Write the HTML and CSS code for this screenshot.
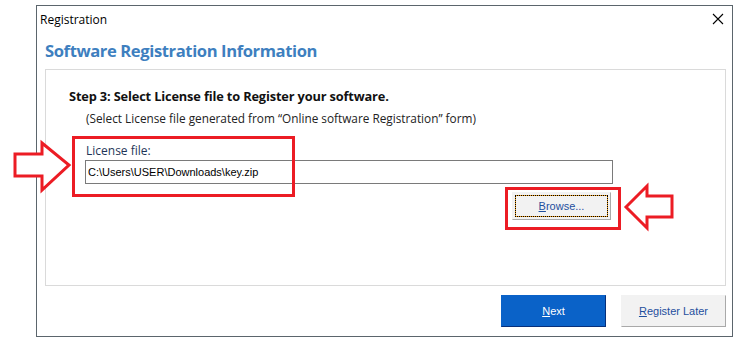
FILE: index.html
```html
<!DOCTYPE html>
<html lang="en">
<head>
  <meta charset="UTF-8">
  <title>Registration</title>
  <link rel="stylesheet" href="styles.css">
</head>
<body>
  <div class="window">
    <div class="titlebar">
      <span class="title">Registration</span>
      <svg class="close" width="12" height="12" viewBox="0 0 12 12">
        <path d="M1 1 L11 11 M11 1 L1 11" stroke="#000" stroke-width="1.1" fill="none"/>
      </svg>
    </div>
    <h1 class="heading">Software Registration Information</h1>
    <div class="panel">
      <p class="step">Step 3: Select License file to Register your software.</p>
      <p class="hint">(Select License file generated from “Online software Registration” form)</p>
      <div class="field">
        <label class="label" for="license">License file:</label>
        <input class="input" id="license" type="text" value="C:\Users\USER\Downloads\key.zip">
      </div>
      <div class="browse-row">
        <button class="btn browse"><span class="focus"><u>B</u>rowse...</span></button>
      </div>
    </div>
    <div class="actions">
      <button class="btn primary"><u>N</u>ext</button>
      <button class="btn secondary"><u>R</u>egister Later</button>
    </div>
  </div>

  <!-- red annotation marks drawn over the screenshot -->
  <svg class="marks" width="741" height="342" viewBox="0 0 741 342">
    <g fill="none" stroke="#ec1c24" stroke-width="3">
      <rect x="73.5" y="137.5" width="220" height="58"/>
      <rect x="506.5" y="188.5" width="113" height="40"/>
      <polygon points="15,154 42,154 42,143 69,165 42,190 42,176 15,176" fill="#fff"/>
      <polygon points="626,207 647,186 647,196 672,196 672,217 647,217 647,228" fill="#fff"/>
    </g>
  </svg>
</body>
</html>
```

FILE: styles.css
```css
body {
  margin: 0;
  background: #fff;
  font-family: "Open Sans", "Noto Sans", sans-serif;
  position: relative;
  width: 741px;
  height: 342px;
  overflow: hidden;
}
.window {
  margin: 5px 0 0 36px;
  width: 695px;
  height: 330px;
  border: 1px solid #5b656c;
  background: #fff;
  display: flex;
  flex-direction: column;
}
.titlebar {
  height: 26px;
  display: flex;
  align-items: center;
  justify-content: space-between;
  padding: 0 8px 0 3px;
}
.title {
  font-size: 12px;
  color: #000;
}
.heading {
  margin: 7px 0 0 8px;
  font-size: 16.6px;
  font-weight: 700;
  color: #3e7fbf;
  line-height: 24px;
  letter-spacing: -0.4px;
}
.panel {
  margin: 6px 6px 0 8px;
  height: 215px;
  border: 1px solid #dadada;
  padding: 0 0 0 23px;
}
.step {
  margin: 17px 0 0;
  font-size: 12.8px;
  font-weight: 700;
  color: #111;
  line-height: 18px;
  letter-spacing: -0.15px;
}
.hint {
  margin: 5px 0 0 17px;
  font-size: 11.8px;
  color: #222;
  line-height: 17px;
}
.field {
  margin: 16px 0 0 16px;
  display: flex;
  flex-direction: column;
}
.label {
  font-size: 12px;
  color: #1e3557;
  line-height: 16px;
  margin-left: 1px;
}
.input {
  box-sizing: border-box;
  width: 528px;
  height: 24px;
  margin-top: 1px;
  border: 1px solid #7a7a7a;
  padding: 0 2px;
  font-family: "Liberation Sans", Arial, sans-serif;
  font-size: 11px;
  color: #000;
  outline: none;
}
.browse-row {
  display: flex;
  justify-content: flex-end;
  padding-right: 114px;
  margin-top: 8px;
}
.btn {
  font-family: "Liberation Sans", Arial, sans-serif;
  font-size: 11px;
  cursor: pointer;
  padding: 0;
}
.browse {
  width: 99px;
  height: 28px;
  background: #f2f2f2;
  border: 1px solid;
  border-color: #f2f2f2 #a9a9a9 #a9a9a9 #f2f2f2;
  color: #1f4f9e;
  display: flex;
  padding: 2px;
}
.focus {
  flex: 1;
  display: flex;
  align-items: center;
  justify-content: center;
  border: 1px dotted #000;
  background: linear-gradient(#f2f2f2, #f2f2f2) padding-box, #f4a31e border-box;
}
.actions {
  display: flex;
  justify-content: flex-end;
  gap: 15px;
  margin: 9px 6px 0 0;
}
.primary {
  width: 105px;
  height: 32px;
  background: #0a62c8;
  color: #fff;
  border: 1px solid #0a62c8;
  border-right-color: #062f7a;
  border-bottom-color: #062f7a;
}
.secondary {
  width: 105px;
  height: 32px;
  background: #f2f2f2;
  color: #1f4f9e;
  border: 1px solid #f2f2f2;
  border-right-color: #a9a9a9;
  border-bottom-color: #a9a9a9;
}
.marks {
  position: absolute;
  left: 0;
  top: 0;
  pointer-events: none;
}
```
